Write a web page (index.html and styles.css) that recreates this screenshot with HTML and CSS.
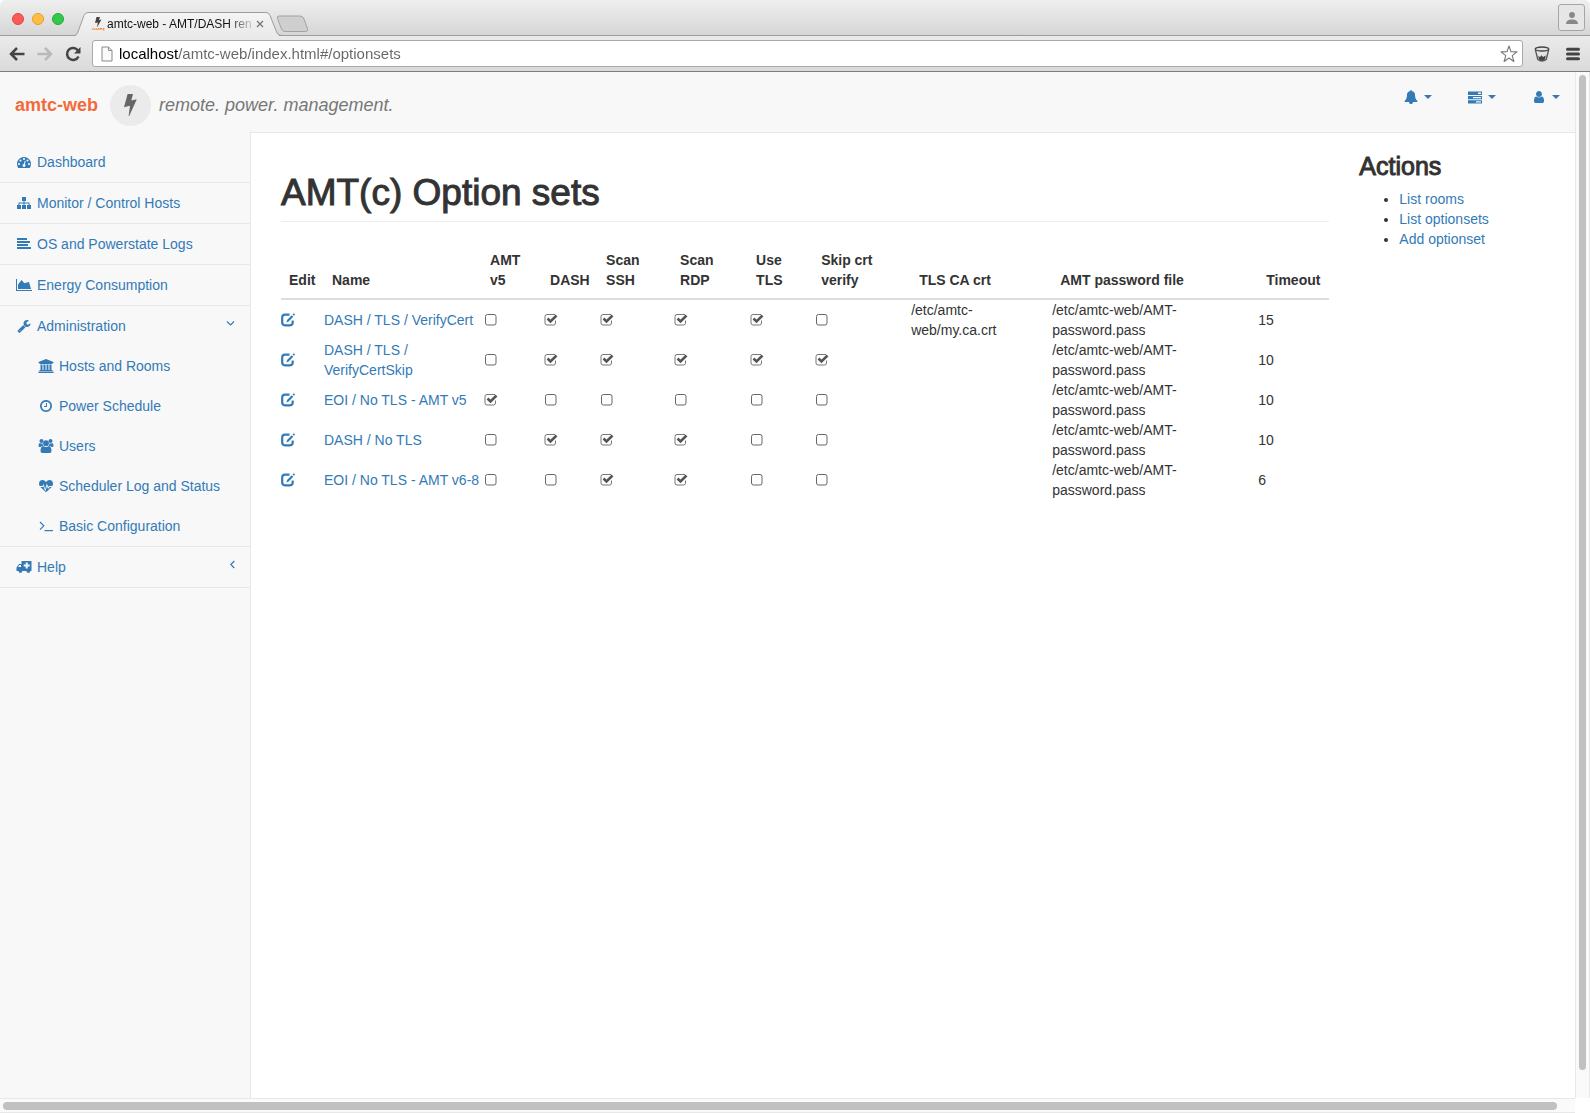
FILE: index.html
```html
<!DOCTYPE html>
<html lang="en">
<head>
<meta charset="utf-8">
<meta name="viewport" content="width=device-width, initial-scale=1">
<title>amtc-web - AMT/DASH remote power management</title>
<link rel="stylesheet" href="styles.css">
</head>
<body>
<svg class="sprite" aria-hidden="true">
  <symbol id="bolt" viewBox="0 0 13 22"><path d="M3.600 0H9L7.300 6.400 12.800 5.200 5.200 22H4.600L6 11.800 0 13.200Z"/></symbol>
  <symbol id="caret" viewBox="0 0 8 4"><path d="M0 0H8L4 4Z"/></symbol>
  <symbol id="bell" viewBox="0 0 1792 1792"><path d="M1728 1408q0 52-38 90t-90 38h-448q0 106-75 181t-181 75-181-75-75-181h-448q-52 0-90-38t-38-90q50-42 91-88t85-119.500 74.500-158.500 50-206 19.500-260q0-152 117-282.500t307-158.500q-8-19-8-39 0-40 28-68t68-28 68 28 28 68q0 20-8 39 190 28 307 158.500t117 282.500q0 139 19.500 260t50 206 74.500 158.500 85 119.500 91 88z"/></symbol>
  <symbol id="tasks" viewBox="0 0 14 14"><path fill-rule="evenodd" d="M0 1.500H14V5H0ZM10 2.500V4H13V2.500ZM0 6H14V9.200H0ZM5 7V8.200H13V7ZM0 10.200H14V13.500H0ZM8 11.200V12.500H13V11.200Z"/></symbol>
  <symbol id="user" viewBox="0 0 1792 1792"><path d="M1536 1399q0 109-62.500 187t-150.500 78h-854q-88 0-150.500-78t-62.500-187q0-85 8.500-160.500t31.500-152 58.500-131 94-89 134.500-34.500q131 128 313 128t313-128q76 0 134.500 34.500t94 89 58.500 131 31.500 152 8.500 160.500zm-256-887q0 159-112.500 271.500t-271.500 112.500-271.500-112.500-112.500-271.500 112.500-271.500 271.500-112.500 271.500 112.500 112.500 271.500z"/></symbol>
  <symbol id="gauge" viewBox="0 0 1792 1792"><path d="M384 1152q0-53-37.500-90.500t-90.500-37.500-90.500 37.500-37.500 90.500 37.500 90.500 90.500 37.500 90.500-37.500 37.500-90.500zm192-448q0-53-37.500-90.500t-90.500-37.500-90.500 37.500-37.500 90.500 37.500 90.500 90.500 37.500 90.500-37.500 37.500-90.500zm428 481l101-382q6-26-7.500-48.500t-38.500-29.500-48 6.500-30 39.500l-101 382q-60 5-107 43.500t-63 98.500q-20 77 20 146t117 89 146-20 89-117q16-60-6-117t-72-91zm660-33q0-53-37.500-90.500t-90.500-37.500-90.500 37.500-37.500 90.500 37.500 90.500 90.500 37.500 90.500-37.500 37.500-90.500zm-640-640q0-53-37.500-90.500t-90.500-37.500-90.500 37.500-37.500 90.500 37.500 90.500 90.500 37.500 90.500-37.500 37.500-90.500zm448 192q0-53-37.500-90.500t-90.500-37.500-90.500 37.500-37.500 90.500 37.500 90.500 90.500 37.500 90.500-37.500 37.500-90.500zm320 448q0 261-141 483-19 29-54 29h-1402q-35 0-54-29-141-221-141-483 0-182 71-348t191-286 286-191 348-71 348 71 286 191 191 286 71 348z"/></symbol>
  <symbol id="sitemap" viewBox="0 0 14 14"><path d="M5 1H9V5H7.500V6.500H12.500V9H14V13H10V9H11.500V7.500H7.500V9H9V13H5V9H6.500V7.500H2.500V9H4V13H0V9H1.500V6.500H6.500V5H5Z"/></symbol>
  <symbol id="align" viewBox="0 0 14 14"><path d="M0 1H10V3H0ZM0 4H13V6H0ZM0 7H11V9H0ZM0 10H14V12H0Z"/></symbol>
  <symbol id="chart" viewBox="0 0 2048 1792"><path d="M2048 1536v128h-2048v-1536h128v1408h1920zM1664 512l256 896h-1664v-576l448-576 370 400 180-60Z"/></symbol>
  <symbol id="wrench" viewBox="0 0 1792 1792"><path d="M448 1472q0-26-19-45t-45-19-45 19-19 45 19 45 45 19 45-19 19-45zm644-420l-682 682q-37 37-90 37-52 0-91-37l-106-108q-38-36-38-90 0-53 38-91l681-681q39 98 114.500 173.500t173.500 114.500zm634-435q0 39-23 106-47 134-164.500 217.500t-258.500 83.500q-185 0-316.500-131.500t-131.500-316.500 131.500-316.500 316.500-131.500q58 0 121.500 16.500t107.500 46.500q16 11 16 28t-16 28l-293 169v224l193 107q5-3 79-48.500t135.500-81 70.500-35.500q15 0 23.500 10t8.500 25z"/></symbol>
  <symbol id="bank" viewBox="0 0 15 14"><path d="M7.500 0 15 3V4H14V5H1V4H0V3ZM2 5.500H4V11H5V5.500H7V11H8V5.500H10V11H11V5.500H13V11H14V12H1V11H2ZM0 12.600H15V14H0Z"/></symbol>
  <symbol id="clock" viewBox="0 0 1792 1792"><path d="M1024 544v448q0 14-9 23t-23 9h-320q-14 0-23-9t-9-23v-64q0-14 9-23t23-9h224v-352q0-14 9-23t23-9h64q14 0 23 9t9 23zm416 352q0-148-73-273t-198-198-273-73-273 73-198 198-73 273 73 273 198 198 273 73 273-73 198-198 73-273zm224 0q0 209-103 385.500t-279.500 279.500-385.500 103-385.500-103-279.500-279.500-103-385.500 103-385.500 279.500-279.500 385.500-103 385.500 103 279.500 279.500 103 385.500z"/></symbol>
  <symbol id="users" viewBox="0 0 15 14"><circle cx="3" cy="2" r="2"/><circle cx="12" cy="2" r="2"/><circle cx="7.500" cy="4.200" r="2.900"/><path d="M1.500 4Q3 5 4 4.200 4 6 5 7H3.500Q2.800 7.200 2.300 8H1.200Q0 8 0 6.500 0 4 1.500 4ZM13.500 4Q12 5 11 4.200 11 6 10 7H11.500Q12.200 7.200 12.700 8H13.800Q15 8 15 6.500 15 4 13.500 4ZM4.700 7Q7.500 9 10.300 7 13 7.500 13 12 13 14 11.200 14H3.800Q2 14 2 12 2 7.500 4.700 7Z"/></symbol>
  <symbol id="heart" viewBox="0 0 14 14"><path d="M7 3Q5.500 1 3.700 1 0 1 0 4.800 0 5.800.6 7H3.500L4.500 5 6.200 10 7.800 4.500 9.300 8 10 7H13.400Q14 5.800 14 4.800 14 1 10.300 1 8.500 1 7 3ZM1.300 8 7 13.200 12.700 8H10.500L9.100 10 8 7.300 6.300 12.200 4.400 7.300 4 8Z"/></symbol>
  <symbol id="terminal" viewBox="0 0 14 14"><path d="M1 3 4.800 6.800 1 10.600" fill="none" stroke="currentColor" stroke-width="1.200"/><path d="M5.500 11H14V12.200H5.500Z"/></symbol>
  <symbol id="ambulance" viewBox="0 0 15 14"><path fill-rule="evenodd" d="M5 1H15V11H13.900A2 2 0 0 1 10 11H5.900A2 2 0 0 1 2 11H0V7.500L2.500 4H5ZM1.500 7H4.500V5H3ZM9.200 2.500V4.500H7.200V6.500H9.200V8.500H11.200V6.500H13.200V4.500H11.200V2.500Z"/><circle cx="3.900" cy="11.300" r="1.500"/><circle cx="11.900" cy="11.300" r="1.500"/></symbol>
  <symbol id="edit" viewBox="0 0 14 14"><path d="M8.500 1.700H4Q1.200 1.700 1.200 4.400V9.600Q1.200 12.300 4 12.300H9Q11.700 12.300 11.700 9.600V7.500" fill="none" stroke="currentColor" stroke-width="2.200"/><path d="M5.500 9.500 6 7 10.800 2.200 12.300 3.700 7.600 8.500ZM11.600 1.400 12.300.6Q12.800.2 13.300.7L13.700 1.100Q14.200 1.600 13.700 2.100L13 2.800Z"/></symbol>
  <symbol id="down" viewBox="0 0 9 9"><path d="M1 2.500 4.500 6 8 2.500" fill="none" stroke="currentColor" stroke-width="1.200"/></symbol>
  <symbol id="left" viewBox="0 0 9 9"><path d="M8.300 1 4.800 4.500 8.300 8" fill="none" stroke="currentColor" stroke-width="1.200"/></symbol>
</svg>

<header class="browser">
  <div class="tabstrip">
    <div class="lights"><i class="close"></i><i class="minimise"></i><i class="zoom"></i></div>
    <div class="tab">
      <svg class="tab-shape" viewBox="0 0 210 25" aria-hidden="true">
        <defs><linearGradient id="tabfill" x2="0" y2="1"><stop stop-color="#f4f4f4"/><stop offset="1" stop-color="#eaeaea"/></linearGradient></defs>
        <path d="M0 24.500Q2.500 24 3.500 21L10 3.500Q11 .5 14 .5H192Q195 .5 196 3.500L203 21Q204.500 24.500 208 24.500V25H0Z" fill="url(#tabfill)"/>
        <path d="M0 23.500Q2.500 23.500 3.500 21L10 3.500Q11 .5 14 .5H192Q195 .5 196 3.500L203 21Q204.500 23.500 208 23.500" fill="none" stroke="#9c9c9c"/>
      </svg>
      <svg class="favicon" viewBox="0 0 14 14" aria-hidden="true"><path d="M5.500 0H9L8 3 10.500 2.500 6 10.500 6.800 5.500 4 6Z" fill="#444"/><path d="M1 13 2.500 11 4 13M5 13V11.500L6.500 12.500 8 11.500V13M8.500 11.500H11M10 11.500V13M13.500 11.500H12V13H13.500" fill="none" stroke="#f58a3c"/></svg>
      <span class="tab-title">amtc-web - AMT/DASH ren</span>
      <button class="plain" type="button" aria-label="Close tab"><svg class="tab-close" viewBox="0 0 8 8"><path d="M1 1 7 7M7 1 1 7" fill="none" stroke="#777" stroke-width="1.400"/></svg></button>
    </div>
    <button class="plain new-tab" type="button" aria-label="New tab"><svg viewBox="0 0 34 18"><path d="M3 1H24Q27 1 28 4L31.500 13.500Q32.500 16.500 29.500 16.500H9Q6.500 16.500 5.500 14L1.500 3.500Q.8 1 3 1Z" fill="#cfcfcf" stroke="#a2a2a2"/></svg></button>
    <button class="profile" type="button" aria-label="Profile"><svg viewBox="0 0 14 14"><circle cx="7" cy="4" r="2.900" fill="#888"/><path d="M1 13Q1 8.500 7 8.500T13 13Z" fill="#888"/></svg></button>
  </div>
  <div class="toolbar">
    <button class="plain" type="button" aria-label="Back"><svg class="tool" viewBox="0 0 16 16"><path d="M15.500 8H2M8 2 2 8 8 14" fill="none" stroke="#444" stroke-width="2.500"/></svg></button>
    <button class="plain" type="button" aria-label="Forward"><svg class="tool" viewBox="0 0 16 16"><path d="M.5 8H14M8 2 14 8 8 14" fill="none" stroke="#b9b9b9" stroke-width="2.500"/></svg></button>
    <button class="plain" type="button" aria-label="Reload"><svg class="tool" viewBox="0 0 16 16"><path d="M13 4.500A6 6 0 1 0 13.500 10.500" fill="none" stroke="#444" stroke-width="2.500"/><path d="M15.500 1V7.500H9Z" fill="#444"/></svg></button>
    <div class="address">
      <svg class="page-icon" viewBox="0 0 12 16"><path d="M1 1H7.500L11 4.500V15H1ZM7.500 1V4.500H11" fill="#fafafa" stroke="#8a8a8a"/></svg>
      <input class="url" type="text" aria-label="Address" value="localhost/amtc-web/index.html#/optionsets">
      <button class="plain" type="button" aria-label="Bookmark"><svg class="star" viewBox="0 0 18 18"><path d="M9 1 11 6.700 17 6.900 12.200 10.600 13.900 16.500 9 13 4.100 16.500 5.800 10.600 1 6.900 7 6.700Z" fill="none" stroke="#777" stroke-width="1.100" stroke-linejoin="round"/></svg></button>
    </div>
    <button class="plain" type="button" aria-label="Extension"><svg class="tool" viewBox="0 0 16 16"><ellipse cx="8" cy="3" rx="6.800" ry="2" fill="none" stroke="#444" stroke-width="1.300"/><path d="M1.300 3.500 3.800 13.500Q8 16.500 12.200 13.500L14.700 3.500" fill="none" stroke="#555" stroke-width="1.300"/><path d="M4.200 10 6 11 7.500 9.200 9 11 11.800 9.500 11 13.500Q8 15.500 5 13.500Z" fill="#444"/></svg></button>
    <button class="plain menu-button" type="button" aria-label="Menu"><svg class="tool" viewBox="0 0 16 16"><path d="M2.500 3.200H13.500M2.500 8H13.500M2.500 12.800H13.500" stroke="#444" stroke-width="3" stroke-linecap="round"/></svg></button>
  </div>
</header>

<div class="viewport">
  <div class="page">
    <nav class="navbar">
      <a class="brand" href="#"><b>amtc-web</b><span class="disc"><svg class="brand-bolt"><use href="#bolt"/></svg></span><em>remote. power. management.</em></a>
      <div class="top-links">
        <a href="#" aria-label="Alerts"><svg class="icon"><use href="#bell"/></svg><svg class="caret"><use href="#caret"/></svg></a>
        <a href="#" aria-label="Tasks"><svg class="icon"><use href="#tasks"/></svg><svg class="caret"><use href="#caret"/></svg></a>
        <a href="#" aria-label="User"><svg class="icon"><use href="#user"/></svg><svg class="caret"><use href="#caret"/></svg></a>
      </div>
    </nav>
    <div class="columns">
      <aside class="sidebar">
        <ul class="menu">
          <li><a href="#"><svg class="icon"><use href="#gauge"/></svg>Dashboard</a></li>
          <li><a href="#"><svg class="icon"><use href="#sitemap"/></svg>Monitor / Control Hosts</a></li>
          <li><a href="#"><svg class="icon"><use href="#align"/></svg>OS and Powerstate Logs</a></li>
          <li><a href="#"><svg class="icon"><use href="#chart"/></svg>Energy Consumption</a></li>
          <li><a href="#"><svg class="icon"><use href="#wrench"/></svg>Administration<svg class="arrow"><use href="#down"/></svg></a>
            <ul class="submenu">
              <li><a href="#"><svg class="icon"><use href="#bank"/></svg>Hosts and Rooms</a></li>
              <li><a href="#"><svg class="icon"><use href="#clock"/></svg>Power Schedule</a></li>
              <li><a href="#"><svg class="icon"><use href="#users"/></svg>Users</a></li>
              <li><a href="#"><svg class="icon"><use href="#heart"/></svg>Scheduler Log and Status</a></li>
              <li><a href="#"><svg class="icon"><use href="#terminal"/></svg>Basic Configuration</a></li>
            </ul>
          </li>
          <li><a href="#"><svg class="icon"><use href="#ambulance"/></svg>Help<svg class="arrow"><use href="#left"/></svg></a></li>
        </ul>
      </aside>
      <main class="content">
        <section class="sets">
          <h1>AMT(c) Option sets</h1>
          <table>
            <colgroup><col class="c-edit"><col class="c-name"><col class="c-v5"><col class="c-dash"><col class="c-ssh"><col class="c-rdp"><col class="c-tls"><col class="c-skip"><col class="c-ca"><col class="c-pass"><col class="c-time"></colgroup>
            <thead><tr><th>Edit</th><th>Name</th><th>AMT v5</th><th>DASH</th><th>Scan SSH</th><th>Scan RDP</th><th>Use TLS</th><th>Skip crt verify</th><th>TLS CA crt</th><th>AMT password file</th><th>Timeout</th></tr></thead>
            <tbody>
              <tr><td><a href="#" aria-label="Edit"><svg class="edit"><use href="#edit"/></svg></a></td><td><a href="#">DASH / TLS / VerifyCert</a></td>
                <td><input type="checkbox" aria-label="AMT v5"></td><td><input type="checkbox" aria-label="DASH" checked></td><td><input type="checkbox" aria-label="Scan SSH" checked></td><td><input type="checkbox" aria-label="Scan RDP" checked></td><td><input type="checkbox" aria-label="Use TLS" checked></td><td><input type="checkbox" aria-label="Skip crt verify"></td>
                <td>/etc/amtc-web/my.ca.crt</td><td>/etc/amtc-web/AMT-password.pass</td><td>15</td></tr>
              <tr><td><a href="#" aria-label="Edit"><svg class="edit"><use href="#edit"/></svg></a></td><td><a href="#">DASH / TLS / VerifyCertSkip</a></td>
                <td><input type="checkbox" aria-label="AMT v5"></td><td><input type="checkbox" aria-label="DASH" checked></td><td><input type="checkbox" aria-label="Scan SSH" checked></td><td><input type="checkbox" aria-label="Scan RDP" checked></td><td><input type="checkbox" aria-label="Use TLS" checked></td><td><input type="checkbox" aria-label="Skip crt verify" checked></td>
                <td></td><td>/etc/amtc-web/AMT-password.pass</td><td>10</td></tr>
              <tr><td><a href="#" aria-label="Edit"><svg class="edit"><use href="#edit"/></svg></a></td><td><a href="#">EOI / No TLS - AMT v5</a></td>
                <td><input type="checkbox" aria-label="AMT v5" checked></td><td><input type="checkbox" aria-label="DASH"></td><td><input type="checkbox" aria-label="Scan SSH"></td><td><input type="checkbox" aria-label="Scan RDP"></td><td><input type="checkbox" aria-label="Use TLS"></td><td><input type="checkbox" aria-label="Skip crt verify"></td>
                <td></td><td>/etc/amtc-web/AMT-password.pass</td><td>10</td></tr>
              <tr><td><a href="#" aria-label="Edit"><svg class="edit"><use href="#edit"/></svg></a></td><td><a href="#">DASH / No TLS</a></td>
                <td><input type="checkbox" aria-label="AMT v5"></td><td><input type="checkbox" aria-label="DASH" checked></td><td><input type="checkbox" aria-label="Scan SSH" checked></td><td><input type="checkbox" aria-label="Scan RDP" checked></td><td><input type="checkbox" aria-label="Use TLS"></td><td><input type="checkbox" aria-label="Skip crt verify"></td>
                <td></td><td>/etc/amtc-web/AMT-password.pass</td><td>10</td></tr>
              <tr><td><a href="#" aria-label="Edit"><svg class="edit"><use href="#edit"/></svg></a></td><td><a href="#">EOI / No TLS - AMT v6-8</a></td>
                <td><input type="checkbox" aria-label="AMT v5"></td><td><input type="checkbox" aria-label="DASH"></td><td><input type="checkbox" aria-label="Scan SSH" checked></td><td><input type="checkbox" aria-label="Scan RDP" checked></td><td><input type="checkbox" aria-label="Use TLS"></td><td><input type="checkbox" aria-label="Skip crt verify"></td>
                <td></td><td>/etc/amtc-web/AMT-password.pass</td><td>6</td></tr>
            </tbody>
          </table>
        </section>
        <section class="actions">
          <h3>Actions</h3>
          <ul>
            <li><a href="#">List rooms</a></li>
            <li><a href="#">List optionsets</a></li>
            <li><a href="#">Add optionset</a></li>
          </ul>
        </section>
      </main>
    </div>
  </div>
  <div class="vbar"><div class="thumb"></div></div>
  <div class="hbar"><div class="thumb"></div></div>
</div>
</body>
</html>
```
FILE: styles.css
```css
* { box-sizing: border-box; }

body {
  margin: 0;
  min-height: 100vh;
  display: flex;
  flex-direction: column;
  background: #fff;
  color: #333;
  font: 14px/20px "Liberation Sans", Arial, sans-serif;
}

a { color: #337ab7; text-decoration: none; }
svg { display: block; flex: none; fill: currentColor; }
ul { margin: 0; padding: 0; list-style: none; }
.sprite { display: none; }
.plain { display: block; padding: 0; border: 0; background: none; }

/* Browser frame */
.browser { border-bottom: 1px solid #7d7d7d; }
.tabstrip {
  display: flex;
  align-items: center;
  height: 36px;
  padding: 0 5px 0 12px;
  border-bottom: 1px solid #9c9c9c;
  border-radius: 5px 5px 0 0;
  background: linear-gradient(#efefef, #d6d6d6);
}
.lights { display: flex; gap: 8px; width: 62px; padding-top: 2px; }
.lights i { width: 12px; height: 12px; border-radius: 50%; }
.close { background: #fc5b57; border: 1px solid #e2443f; }
.minimise { background: #fdbe41; border: 1px solid #e0a030; }
.zoom { background: #34c84a; border: 1px solid #24a934; }
.tab {
  position: relative;
  align-self: flex-end;
  display: flex;
  align-items: center;
  width: 206px;
  height: 24px;
  margin-bottom: -1px;
  padding-left: 17px;
}
.tab-shape { position: absolute; left: 0; top: 0; width: 210px; height: 25px; }
.favicon { position: relative; width: 14px; height: 14px; margin-right: 2px; }
.tab-title {
  position: relative;
  width: 145px;
  margin-right: 4px;
  white-space: nowrap;
  color: #111;
  font-size: 12px;
  mask-image: linear-gradient(90deg, #000 120px, transparent 150px);
}
.tab .plain { position: relative; }
.tab-close { width: 8px; height: 8px; }
.new-tab svg { width: 34px; height: 18px; }
.new-tab { margin-top: -2px; padding-top: 14px; height: 36px; margin-left: -4px; }
.profile {
  display: grid;
  place-items: center;
  width: 27px;
  height: 27px;
  margin-left: auto;
  padding: 0;
  border: 1px solid #a6a6a6;
  border-radius: 3px;
  background: #e6e6e6;
}
.profile svg { width: 14px; height: 14px; }
.toolbar {
  display: flex;
  align-items: center;
  gap: 12px;
  height: 35px;
  padding: 0 9px;
  background: linear-gradient(#ebebeb, #dadada);
}
.tool { width: 16px; height: 16px; }
.menu-button { margin-left: 3px; }
.address {
  flex: 1;
  display: flex;
  align-items: center;
  gap: 6px;
  height: 27px;
  margin: 0 -1px;
  padding: 0 4px 0 8px;
  border: 1px solid #a9a9a9;
  border-radius: 3px;
  background: #fff;
}
.page-icon { width: 12px; height: 16px; }
.url {
  flex: 1;
  min-width: 0;
  height: 22px;
  padding: 0;
  border: 0;
  outline: 0;
  background: linear-gradient(90deg, #000 59px, #666 59px) text;
  color: transparent;
  font: 15px/22px "Liberation Sans", Arial, sans-serif;
}
.star { width: 18px; height: 18px; }

/* Scrolled area with its two bars */
.viewport {
  flex: 1;
  display: grid;
  grid-template-columns: 1fr 15px;
  grid-template-rows: 1fr 15px;
}
.page { display: flex; flex-direction: column; background: #f8f8f8; }
.vbar { padding: 3px 3px 28px; border: solid #e8e8e8; border-width: 0 1px; background: #fafafa; }
.hbar { padding: 3px 18px 2px 3px; border: solid #e8e8e8; border-width: 1px 0; background: #fafafa; }
.thumb { height: 100%; border-radius: 4px; background: #c1c1c1; }

/* Top bar */
.navbar { display: flex; justify-content: space-between; height: 60px; }
.brand { display: flex; align-items: center; padding: 6px 0 0 15px; color: #777; font-size: 18px; }
.brand b { color: #f26a3c; }
.disc {
  display: grid;
  place-items: center;
  width: 41px;
  height: 41px;
  margin: 0 8px 0 12px;
  border-radius: 50%;
  background: #ebebeb;
  color: #666;
}
.brand-bolt { width: 13px; height: 22px; }
.top-links { display: flex; gap: 4px; height: 50px; }
.top-links a { display: flex; align-items: center; gap: 4px; padding: 0 15px; }
.caret { width: 8px; height: 4px; }
.icon { width: 18px; height: 14px; }

/* Side menu */
.columns { flex: 1; display: flex; }
.sidebar { width: 250px; padding-top: 10px; }
.menu > li { border-bottom: 1px solid #e7e7e7; }
.menu a { display: flex; align-items: center; gap: 4px; height: 40px; padding: 0 15px; }
.submenu a { padding-left: 37px; }
.arrow { width: 9px; height: 9px; margin: 0 0 5px auto; }

/* Content */
.content {
  flex: 1;
  display: grid;
  grid-template-columns: 10fr 2fr;
  padding: 0 15px;
  border: solid #e7e7e7;
  border-width: 1px 0 0 1px;
  background: #fff;
}
.sets, .actions { min-width: 0; padding: 0 15px; }
h1, h3 { font-weight: 400; -webkit-text-stroke: 1px #333; }
h1 {
  margin: 40px 0 20px;
  padding-bottom: 8px;
  border-bottom: 1px solid #eee;
  font-size: 37px;
  line-height: 40px;
}
h3 { margin: 20px 0 10px; font-size: 25px; line-height: 26px; }
.actions ul { padding-left: 40px; list-style: disc; }

table { width: 100%; table-layout: fixed; border-collapse: separate; border-spacing: 0; }
th { padding: 8px; border-bottom: 2px solid #ddd; text-align: left; vertical-align: bottom; }
td { height: 40px; padding: 0; vertical-align: middle; }
.c-edit { width: 43px; }
.c-name { width: 158px; }
.c-v5 { width: 60px; }
.c-dash { width: 56px; }
.c-ssh { width: 74px; }
.c-rdp { width: 76px; }
.c-tls { width: 65px; }
.c-skip { width: 98px; }
.c-ca { width: 141px; }
.c-pass { width: 206px; }
.c-time { width: 71px; }
.edit { width: 14px; height: 14px; }
input[type="checkbox"] {
  appearance: none;
  display: block;
  width: 18px;
  height: 14px;
  margin: 0;
  background: url("data:image/svg+xml,%3Csvg xmlns='http://www.w3.org/2000/svg' viewBox='0 0 14 14'%3E%3Crect x='1.500' y='1.500' width='10.500' height='10.500' rx='2' fill='none' stroke='%23666'/%3E%3C/svg%3E") center / 14px 14px no-repeat;
}
input[type="checkbox"]:checked {
  background-image: url("data:image/svg+xml,%3Csvg xmlns='http://www.w3.org/2000/svg' viewBox='0 0 14 14'%3E%3Cpath d='M11 1.500H3Q1 1.500 1 3.500V10Q1 12 3 12H9.500Q11.500 12 11.500 10V7.500' fill='none' stroke='%23777'/%3E%3Cpath d='M3.500 5.500 6.500 8.500 12.500 2.500' fill='none' stroke='%23555' stroke-width='2.600'/%3E%3C/svg%3E");
}
```
